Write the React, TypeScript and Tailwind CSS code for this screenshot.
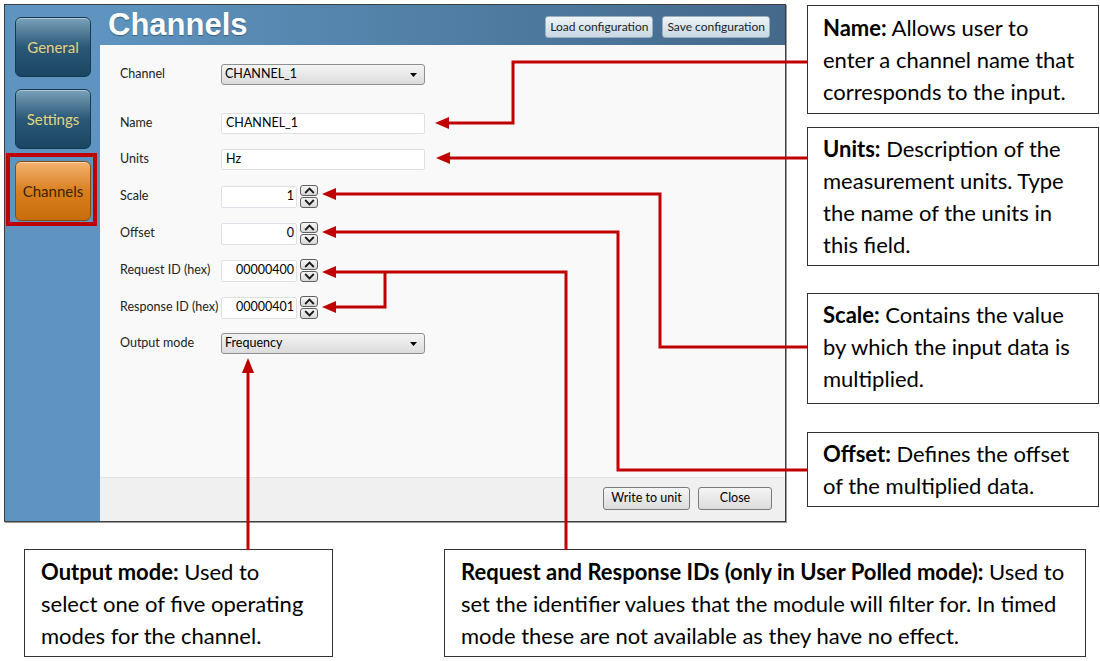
import React from "react";

const ui = { fontFamily: "Lato, 'Liberation Sans', sans-serif" };
const note = { fontFamily: "Lato, 'Open Sans', sans-serif" };

function NavButton({ label, active }: { label: string; active?: boolean }) {
  return (
    <div
      className={
        active
          ? "flex h-[60px] w-[76px] items-center justify-center rounded-[6px] border border-[#8a4a08] bg-linear-to-b from-[#f3b46c] via-[#d97f1c] to-[#c86d0c] text-[15px] text-[#3b2407] shadow-[inset_0_1px_0_rgba(255,255,255,0.5)]"
          : "flex h-[60px] w-[76px] items-center justify-center rounded-[6px] border border-[#163a52] bg-linear-to-b from-[#7aa3bb] via-[#2a5877] to-[#1b4664] text-[15px] text-[#e3d47e] shadow-[inset_0_1px_0_rgba(255,255,255,0.4)]"
      }
      style={ui}
    >
      {label}
    </div>
  );
}

function Select({ value }: { value: string }) {
  return (
    <div className="flex h-[21px] w-[204px] items-center justify-between rounded-[3px] border border-[#8e8f8f] bg-linear-to-b from-[#f4f4f4] to-[#dcdcdc] pl-[3px] pr-[7px] text-[12.5px] text-black">
      <span>{value}</span>
      <svg width="7" height="4" viewBox="0 0 7 4">
        <path d="M0 0h7L3.5 4z" fill="#000" />
      </svg>
    </div>
  );
}

function Spinner() {
  return (
    <div className="ml-[3px] flex h-[23px] w-[18px] flex-col gap-px">
      {[0, 1].map((i) => (
        <div
          key={i}
          className="flex h-[11px] items-center justify-center rounded-[3px] border border-[#5f5f5f] bg-linear-to-b from-[#f6f6f6] to-[#d8d8d8]"
        >
          <svg width="11" height="7" viewBox="0 0 11 7">
            <path
              d={i === 0 ? "M1.2 6 5.5 1.6 9.8 6" : "M1.2 1 5.5 5.4 9.8 1"}
              fill="none"
              stroke="#1a1a1a"
              strokeWidth="1.8"
            />
          </svg>
        </div>
      ))}
    </div>
  );
}

function Row({ label, top, children }: { label: string; top: string; children: React.ReactNode }) {
  return (
    <div className={`${top} flex items-center`}>
      <div className="w-[101px] text-[12.5px] text-[#222]">{label}</div>
      {children}
    </div>
  );
}

function TextField({ value }: { value: string }) {
  return (
    <div className="flex h-[21px] w-[204px] items-center rounded-[2px] border border-[#dde1e6] bg-white pl-[4px] text-[12.5px] text-black">
      {value}
    </div>
  );
}

function NumField({ value }: { value: string }) {
  return (
    <div className="flex items-center">
      <div className="flex h-[22px] w-[76px] items-center justify-end rounded-[2px] border border-[#dde1e6] bg-white pr-[2px] text-[12.5px] text-black">
        {value}
      </div>
      <Spinner />
    </div>
  );
}

function WinButton({ label, w }: { label: string; w: string }) {
  return (
    <div className={`${w} flex h-[23px] items-center justify-center rounded-[3px] border border-[#7a7a7a] bg-linear-to-b from-[#f5f5f5] to-[#dcdcdc] text-[12.5px] text-black`}>
      {label}
    </div>
  );
}

function Callout({ className, lines }: { className: string; lines: React.ReactNode[] }) {
  return (
    <div className={`border border-[#333] bg-white text-[22px] leading-[32px] text-black ${className}`} style={note}>
      {lines.map((l, i) => (
        <div key={i} className="whitespace-nowrap">
          {l}
        </div>
      ))}
    </div>
  );
}

function Arrows() {
  const red = "#c00000";
  const left = (x: number, y: number) => `${x},${y} ${x + 14},${y - 6} ${x + 14},${y + 6}`;
  return (
    <svg className="pointer-events-none absolute inset-0" width="1100" height="661" viewBox="0 0 1100 661">
      <g fill="none" stroke={red} strokeWidth="3">
        <polyline points="808,62 513,62 513,123 449,123" />
        <polyline points="808,158 450,158" />
        <polyline points="808,347 660,347 660,194 336,194" />
        <polyline points="808,470 618,470 618,232 336,232" />
        <polyline points="566,550 566,272 336,272" />
        <polyline points="385,272 385,307 336,307" />
        <polyline points="248,550 248,372" />
      </g>
      <g fill={red}>
        <polygon points={left(435, 123)} />
        <polygon points={left(436, 158)} />
        <polygon points={left(322, 194)} />
        <polygon points={left(322, 232)} />
        <polygon points={left(322, 272)} />
        <polygon points={left(322, 307)} />
        <polygon points="248,358 242,373 254,373" />
      </g>
    </svg>
  );
}

export default function App() {
  return (
    <div className="relative h-[661px] w-[1100px] overflow-hidden bg-white">
      <div className="flex">
        {/* app window */}
        <div
          className="ml-[4px] mt-[4px] flex h-[518px] w-[782px] border border-[#3f3f3f] shadow-[1px_1px_0_#9a9a9a]"
          style={ui}
        >
          <div className="flex w-[95px] flex-col bg-[#5e94bf] pl-[10px] pt-[12px]">
            <NavButton label="General" />
            <div className="mt-[12px]">
              <NavButton label="Settings" />
            </div>
            <div className="-ml-[9px] mt-[4px] w-[91px] border-4 border-[#c00000] pb-px pl-[5px] pt-[4px]">
              <NavButton label="Channels" active />
            </div>
          </div>

          <div className="flex flex-1 flex-col">
            <div className="flex h-[40px] items-start justify-between bg-linear-to-r from-[#5e94bf] to-[#44698b] pl-[8px] pr-[15px]">
              <div
                className="text-[31px] font-bold leading-[40px] text-white [text-shadow:0_1px_1px_rgba(0,0,0,0.35)]"
                style={{ fontFamily: "'Liberation Sans', Arial, sans-serif" }}
              >
                Channels
              </div>
              <div className="mt-[11px] flex gap-[9px]">
                {["Load configuration", "Save configuration"].map((t) => (
                  <div
                    key={t}
                    className="flex h-[22px] items-center rounded-[3px] border border-[#9aaebd] bg-linear-to-b from-[#eef3f7] to-[#c9d8e4] px-[4px] text-[12px] text-[#1d1d1d]"
                  >
                    {t}
                  </div>
                ))}
              </div>
            </div>

            <div className="flex flex-1 flex-col bg-[#f9f9f9] pl-[20px]">
              <Row label="Channel" top="mt-[19px]">
                <Select value="CHANNEL_1" />
              </Row>
              <Row label="Name" top="mt-[28px]">
                <TextField value="CHANNEL_1" />
              </Row>
              <Row label="Units" top="mt-[15px]">
                <TextField value="Hz" />
              </Row>
              <Row label="Scale" top="mt-[15px]">
                <NumField value="1" />
              </Row>
              <Row label="Offset" top="mt-[14px]">
                <NumField value="0" />
              </Row>
              <Row label="Request ID (hex)" top="mt-[14px]">
                <NumField value="00000400" />
              </Row>
              <Row label="Response ID (hex)" top="mt-[14px]">
                <NumField value="00000401" />
              </Row>
              <Row label="Output mode" top="mt-[14px]">
                <Select value="Frequency" />
              </Row>
            </div>

            <div className="flex h-[44px] items-start justify-end gap-[8px] border-t border-[#e3e3e3] bg-[#f0f0f0] pr-[13px] pt-[9px]">
              <WinButton label="Write to unit" w="w-[87px]" />
              <WinButton label="Close" w="w-[74px]" />
            </div>
          </div>
        </div>

        {/* right notes */}
        <div className="ml-[21px] flex w-[292px] flex-col">
          <Callout
            className="mt-[5px] h-[109px] pl-[15px] pt-[6px]"
            lines={[
              <><b>Name:</b> Allows user to</>,
              "enter a channel name that",
              "corresponds to the input.",
            ]}
          />
          <Callout
            className="mt-[13px] h-[139px] pl-[15px] pt-[5px]"
            lines={[
              <><b>Units:</b> Description of the</>,
              "measurement units. Type",
              "the name of the units in",
              "this field.",
            ]}
          />
          <Callout
            className="mt-[27px] h-[111px] pl-[15px] pt-[5px]"
            lines={[
              <><b>Scale:</b> Contains the value</>,
              "by which the input data is",
              "multiplied.",
            ]}
          />
          <Callout
            className="mt-[28px] h-[75px] pl-[15px] pt-[5px]"
            lines={[<><b>Offset:</b> Defines the offset</>, "of the multiplied data."]}
          />
        </div>
      </div>

      <div className="mt-[27px] flex">
        <Callout
          className="ml-[24px] h-[108px] w-[309px] pl-[16px] pt-[6px]"
          lines={[
            <><b>Output mode:</b> Used to</>,
            "select one of five operating",
            "modes for the channel.",
          ]}
        />
        <Callout
          className="ml-[111px] h-[108px] w-[642px] pl-[16px] pt-[6px]"
          lines={[
            <><b>Request and Response IDs (only in User Polled mode):</b> Used to</>,
            "set the identifier values that the module will filter for. In timed",
            "mode these are not available as they have no effect.",
          ]}
        />
      </div>

      <Arrows />
    </div>
  );
}
